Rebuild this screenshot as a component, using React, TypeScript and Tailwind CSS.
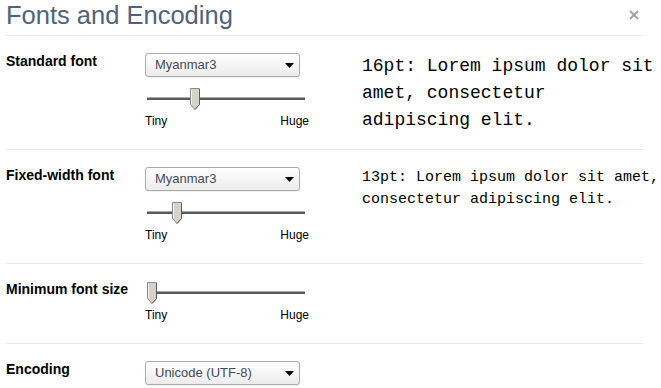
import React from "react";

const sans = { fontFamily: '"Liberation Sans", Arial, sans-serif' };

function Select({ value }: { value: string }) {
  return (
    <div className="relative flex h-[24px] w-[155px] items-center rounded-[3px] border border-[#aaaaaa] bg-gradient-to-b from-[#ffffff] to-[#ececec] pl-[9px] text-[13px] leading-4 text-[#444a5a] shadow-[0_1px_1px_rgba(0,0,0,0.06)]">
      <span>{value}</span>
      <svg className="absolute right-[5px] top-[9px]" width="9" height="5" viewBox="0 0 9 5">
        <path d="M0 0 H9 L4.5 5 Z" fill="#000" />
      </svg>
    </div>
  );
}

function Thumb() {
  return (
    <svg width="11" height="23" viewBox="0 0 11 23">
      <path d="M0.5 0.5 H9.5 V16.5 L5 21.5 L0.5 16.5 Z" fill="#d5d2cc" stroke="#8c8a86" />
      <path d="M1.5 1.5 V16" stroke="#f4f3f0" />
      <path d="M9.5 1 V16.5 L5 21.5" stroke="#5e5d5a" fill="none" />
    </svg>
  );
}

function Slider({ pos }: { pos: number }) {
  return (
    <div>
      <div className="relative h-[24px] w-[165px]">
        <div className="absolute left-[2px] top-[10px] h-[3px] w-[158px] border-t border-[#a9a9a9] bg-[#5a5a5a]" />
        <div className="absolute top-[1px]" style={{ left: pos }}>
          <Thumb />
        </div>
      </div>
      <div className="mt-[3px] flex w-[164px] justify-between text-[12px] leading-[14px] text-black">
        <span>Tiny</span>
        <span>Huge</span>
      </div>
    </div>
  );
}

function Section({
  label,
  children,
  sample,
}: {
  label: string;
  children: React.ReactNode;
  sample?: React.ReactNode;
}) {
  return (
    <div className="flex border-b border-[#e9e9e9] pb-[21px] pt-[17px]">
      <div className="w-[139px] shrink-0 text-[14px] font-bold leading-4 text-black">{label}</div>
      <div className="w-[165px] shrink-0">{children}</div>
      {sample ? <div className="ml-[52px] h-[44px] w-[299px] shrink-0">{sample}</div> : null}
    </div>
  );
}

export default function App() {
  return (
    <div className="h-[388px] w-[661px] overflow-hidden bg-white" style={sans}>
      <div className="w-[637px] ml-[6px]">
        <div className="flex h-[36px] items-start justify-between border-b border-[#e9e9e9]">
          <h1 className="text-[25.5px] font-normal leading-[30px] text-[#53627b]">Fonts and Encoding</h1>
          <svg className="mr-[4px] mt-[10px]" width="10" height="10" viewBox="0 0 10 10">
            <path d="M1 1 L9 9 M9 1 L1 9" stroke="#a3a3a3" strokeWidth="2" />
          </svg>
        </div>

        <Section
          label="Standard font"
          sample={
            <div
              className="text-[18px] leading-[27px] text-black"
              style={{ fontFamily: '"Liberation Mono", "Courier New", monospace' }}
            >
              16pt: Lorem ipsum dolor sit amet, consectetur adipiscing elit.
            </div>
          }
        >
          <Select value="Myanmar3" />
          <div className="mt-[10px]">
            <Slider pos={45} />
          </div>
        </Section>

        <Section
          label="Fixed-width font"
          sample={
            <div
              className="text-[15px] leading-[22px] text-black"
              style={{ fontFamily: '"Liberation Mono", "Courier New", monospace' }}
            >
              13pt: Lorem ipsum dolor sit amet, consectetur adipiscing elit.
            </div>
          }
        >
          <Select value="Myanmar3" />
          <div className="mt-[10px]">
            <Slider pos={27} />
          </div>
        </Section>

        <Section label="Minimum font size">
          <Slider pos={2} />
        </Section>

        <div className="flex pt-[17px]">
          <div className="w-[139px] shrink-0 text-[14px] font-bold leading-4 text-black">Encoding</div>
          <div className="w-[165px] shrink-0">
            <Select value="Unicode (UTF-8)" />
          </div>
        </div>
      </div>
    </div>
  );
}
